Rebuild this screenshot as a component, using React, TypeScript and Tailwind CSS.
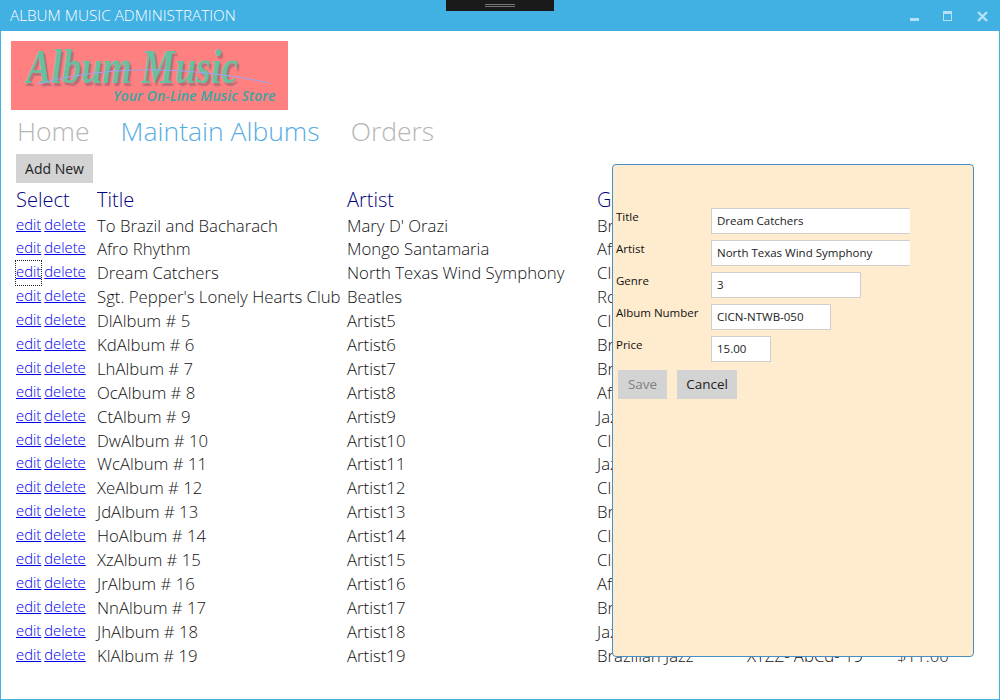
interface Album {
  title: string;
  artist: string;
  genre: string;
}

const albums: Album[] = [
  { title: 'To Brazil and Bacharach', artist: "Mary D' Orazi", genre: 'Brazilian Jazz' },
  { title: 'Afro Rhythm', artist: 'Mongo Santamaria', genre: 'Afro Cuban' },
  { title: 'Dream Catchers', artist: 'North Texas Wind Symphony', genre: 'Classical' },
  { title: "Sgt. Pepper's Lonely Hearts Club", artist: 'Beatles', genre: 'Rock' },
  { title: 'DlAlbum # 5', artist: 'Artist5', genre: 'Classical' },
  { title: 'KdAlbum # 6', artist: 'Artist6', genre: 'Brazilian Jazz' },
  { title: 'LhAlbum # 7', artist: 'Artist7', genre: 'Brazilian Jazz' },
  { title: 'OcAlbum # 8', artist: 'Artist8', genre: 'Afro Cuban' },
  { title: 'CtAlbum # 9', artist: 'Artist9', genre: 'Jazz' },
  { title: 'DwAlbum # 10', artist: 'Artist10', genre: 'Classical' },
  { title: 'WcAlbum # 11', artist: 'Artist11', genre: 'Jazz' },
  { title: 'XeAlbum # 12', artist: 'Artist12', genre: 'Classical' },
  { title: 'JdAlbum # 13', artist: 'Artist13', genre: 'Brazilian Jazz' },
  { title: 'HoAlbum # 14', artist: 'Artist14', genre: 'Classical' },
  { title: 'XzAlbum # 15', artist: 'Artist15', genre: 'Classical' },
  { title: 'JrAlbum # 16', artist: 'Artist16', genre: 'Afro Cuban' },
  { title: 'NnAlbum # 17', artist: 'Artist17', genre: 'Brazilian Jazz' },
  { title: 'JhAlbum # 18', artist: 'Artist18', genre: 'Jazz' },
  { title: 'KlAlbum # 19', artist: 'Artist19', genre: 'Brazilian Jazz' },
];

const fields = [
  { label: 'Title', value: 'Dream Catchers', width: 'w-[199px] border-r-0' },
  { label: 'Artist', value: 'North Texas Wind Symphony', width: 'w-[199px] border-r-0' },
  { label: 'Genre', value: '3', width: 'w-[150px]' },
  { label: 'Album Number', value: 'CICN-NTWB-050', width: 'w-[120px]' },
  { label: 'Price', value: '15.00', width: 'w-[60px]' },
];

const ROW = 'grid grid-cols-[81px_250px_250px_150px_150px_1fr]';

function Logo() {
  return (
    <div className="relative w-[277px] h-[69px] bg-[#fe8080] overflow-hidden">
      <span className="absolute left-[15px] top-[1px] origin-top-left scale-y-[1.25] font-['Liberation_Serif',serif] italic font-bold text-[38px] leading-[40px] whitespace-nowrap text-[#68c0a0] [text-shadow:2px_2px_1px_#c06a78]">
        Album Music
      </span>
      <svg className="absolute left-0 top-0" width="277" height="69" viewBox="0 0 277 69" fill="none">
        <path d="M26 43 Q 130 15 259 42" stroke="#9aa6f0" strokeWidth="1" />
      </svg>
      <span className="absolute left-[102px] top-[46px] font-['Open_Sans',sans-serif] italic font-semibold text-[14.2px] leading-[18px] whitespace-nowrap text-[#3fa5a0]">
        Your On-Line Music Store
      </span>
    </div>
  );
}

function EditDialog() {
  return (
    <div className="absolute left-[611px] top-[164px] w-[362px] h-[493px] bg-[#ffebcd] border border-[#4a8fc4] rounded pt-[43px] pl-[3px] font-['Open_Sans',sans-serif]">
      <div className="flex flex-col gap-[6px]">
        {fields.map((f) => (
          <div key={f.label} className="flex">
            <label className="w-[95px] text-[11.5px] leading-[18px] text-[#111] font-normal">{f.label}</label>
            <input
              readOnly
              value={f.value}
              className={`${f.width} h-[26px] bg-white border border-[#cfcfcf] px-[5px] pb-[2px] text-[11.5px] text-[#222] outline-none`}
            />
          </div>
        ))}
      </div>
      <div className="flex gap-[10px] mt-[8px] ml-[2px]">
        <button className="w-[49px] h-[29px] bg-[#d3d3d3] text-[13.5px] text-[#808080]">Save</button>
        <button className="w-[60px] h-[29px] bg-[#d3d3d3] text-[13.5px] text-[#222]">Cancel</button>
      </div>
    </div>
  );
}

export default function App() {
  return (
    <div className="relative w-[1000px] h-[700px] bg-white border border-t-0 border-[#41b0e2] overflow-hidden font-['Open_Sans',sans-serif] flex flex-col">
      {/* Title bar */}
      <div className="h-[31px] -mx-px bg-[#41b0e2] flex items-center pl-[10px] shrink-0">
        <span className="text-[15.3px] font-light text-white">ALBUM MUSIC ADMINISTRATION</span>
        <div className="ml-auto self-start mt-[11px] flex items-start gap-[24px] pr-[12px]">
          <div className="w-[9px] h-[3px] bg-[#b5e1f6] mt-[7px]" />
          <div className="w-[9px] h-[10px] border border-t-[3px] border-[#b5e1f6]" />
          <svg width="11" height="11" viewBox="0 0 11 11" className="ml-px">
            <path d="M1 1 L10 10 M10 1 L1 10" stroke="#b5e1f6" strokeWidth="2.4" />
          </svg>
        </div>
      </div>
      {/* Drag handle */}
      <div className="absolute left-[445px] top-0 w-[108px] h-[11px] bg-[#1a1a1a] flex flex-col items-center pt-[4px] gap-[1px]">
        <div className="w-[30px] h-px bg-[#777]" />
        <div className="w-[30px] h-px bg-[#777]" />
      </div>

      <div className="pl-[10px] pt-[10px]">
        <Logo />
      </div>

      {/* Nav */}
      <nav className="flex gap-[31px] pl-[16px] mt-[3px] text-[26.5px] leading-[36px] font-light text-[#b6b6b6]">
        <span>Home</span>
        <span className="text-[#56ade2]">Maintain Albums</span>
        <span>Orders</span>
      </nav>

      <div className="pl-[15px] mt-[5px]">
        <button className="w-[77px] h-[29px] bg-[#d3d3d3] text-[14px] text-[#222]">Add New</button>
      </div>

      {/* Table */}
      <div className="pl-[15px] mt-[2px]">
        <div className={`${ROW} h-[28.5px] text-[20px] leading-[30px] font-light text-[#000080]`}>
          <span>Select</span>
          <span>Title</span>
          <span>Artist</span>
          <span>Genre</span>
          <span>Album Number</span>
          <span>Price</span>
        </div>
        {albums.map((a, i) => (
          <div key={a.title} className={`${ROW} h-[23.9px] text-[16.75px] leading-[24px] font-light text-[#111] whitespace-nowrap`}>
            <span className="flex items-start gap-[3px] text-[14.8px] leading-[20px] text-[#0000ee]">
              <a className={`underline ${i === 2 ? 'outline-1 outline-dotted outline-[#222] h-[24px]' : ''}`}>edit</a>
              <a className="underline">delete</a>
            </span>
            <span>{a.title}</span>
            <span>{a.artist}</span>
            <span>{a.genre}</span>
            <span>XYZZ- AbCd- {i + 1}</span>
            <span>$11.00</span>
          </div>
        ))}
      </div>

      <EditDialog />
    </div>
  );
}
